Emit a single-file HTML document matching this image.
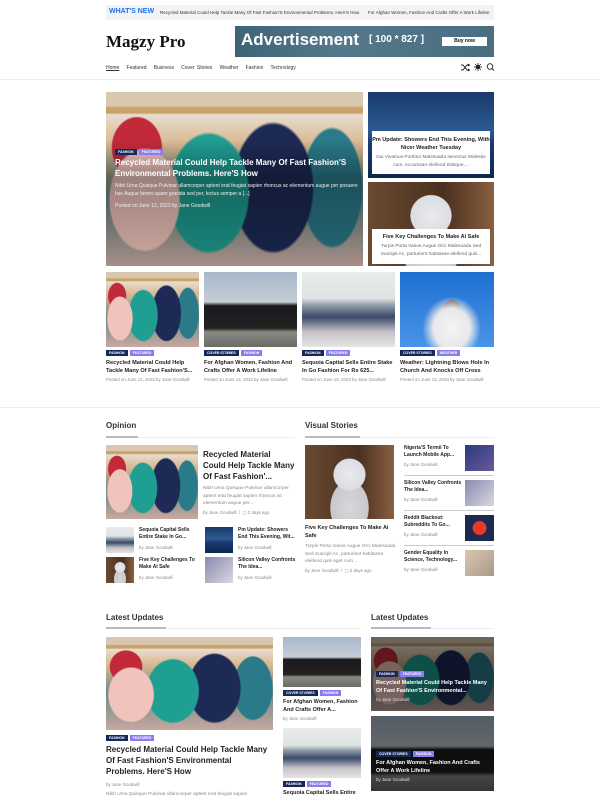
<!DOCTYPE html>
<html><head><meta charset="utf-8"><style>
*{margin:0;padding:0;box-sizing:border-box}
body{width:600px;height:800px;overflow:hidden;background:#fff;font-family:"Liberation Sans",sans-serif;color:#222;position:relative}
.a{position:absolute}
.clothes{background:
radial-gradient(ellipse 14% 30% at 15% 62%,#f0c4bc 0,#f0c4bc 95%,transparent 100%),
radial-gradient(ellipse 16% 35% at 40% 58%,#1f9e92 0,#1f9e92 95%,transparent 100%),
radial-gradient(ellipse 16% 38% at 65% 55%,#1c2a55 0,#1c2a55 95%,transparent 100%),
radial-gradient(ellipse 10% 18% at 12% 32%,#c22a3a 0,#c22a3a 95%,transparent 100%),
radial-gradient(ellipse 12% 35% at 88% 55%,#2a7a8a 0,#2a7a8a 95%,transparent 100%),
linear-gradient(180deg,#d8c8b0 0,#d8c8b0 8%,#c9a36a 9%,#c9a36a 12%,#e8ddd0 13%,#d8b890 30%,#6a8a86 60%,#c8a8a0 100%)}
.crowd{background:linear-gradient(180deg,#a7b8cc 0,#c5cdd5 40%,#1a1a1e 45%,#222 75%,#8a8a85 80%,#6a6a66 100%)}
.store{background:linear-gradient(180deg,#e9ecec 0,#dfe3e2 35%,#8a9aa6 45%,#3a4a6a 60%,#c8c2c8 80%,#e5e5e5 100%)}
.church{background:radial-gradient(ellipse at 55% 75%,#f4f4f4 0,#e8e8ea 25%,transparent 40%),radial-gradient(circle at 55% 48%,#5a4a48 0,#5a4a48 12%,transparent 13%),linear-gradient(180deg,#1e6fd0,#4a94e8)}
.robot{background:radial-gradient(circle at 50% 40%,#e8eaee 0,#dcdde2 25%,transparent 26%),radial-gradient(ellipse at 50% 85%,#d8d8dc 0,#c8c8cc 30%,transparent 31%),linear-gradient(90deg,#6a4a30,#4a3020 60%,#8a6040)}
.sea{background:linear-gradient(180deg,#1a3a6a 0,#2a5a90 45%,#1a3a70 60%,#0a2850 100%)}
.tag{display:inline-block;font-size:3.5px;font-weight:bold;color:#fff;padding:1px 3px;margin-right:2px;text-transform:uppercase;vertical-align:top;line-height:4px}
.t1{background:#15285a}.t2{background:#8a7cf0}
.ttl{font-size:5.6px;font-weight:bold;color:#222;line-height:8px;height:16px;overflow:hidden}
.meta{font-size:4.4px;color:#888;white-space:nowrap}
.h{font-size:8px;font-weight:bold;color:#333}
</style></head><body>
<!-- ticker -->
<div class="a" style="left:106px;top:5px;width:388px;height:15px;background:#f3f3f4"></div>
<div class="a" style="left:109px;top:8px;font-size:7px;font-weight:bold;color:#1e6ff0">WHAT'S NEW</div>
<div class="a" style="left:160px;top:10px;font-size:4.5px;color:#333;white-space:nowrap;width:334px;overflow:hidden">Recycled Material Could Help Tackle Many Of Fast Fashion'S Environmental Problems. Here'S How &nbsp;&nbsp;&nbsp;&nbsp;&nbsp; For Afghan Women, Fashion And Crafts Offer A Work Lifeline</div>
<!-- logo -->
<div class="a" style="left:106px;top:32px;font-family:'Liberation Serif',serif;font-size:17px;font-weight:bold;color:#111">Magzy Pro</div>
<div class="a" style="left:235px;top:26px;width:259px;height:31px;background:linear-gradient(90deg,#3f6476,#55778a 40%,#4a6f80)"></div>
<div class="a" style="left:241px;top:30px;font-size:17px;font-weight:bold;color:#fff">Advertisement</div>
<div class="a" style="left:369px;top:34px;font-size:10px;font-weight:bold;color:#fff">[ 100 * 827 ]</div>
<div class="a" style="left:442px;top:37px;width:45px;height:9px;background:#fff;font-size:5px;font-weight:bold;text-align:center;line-height:9px;color:#111">Buy now</div>
<!-- nav -->
<div class="a" style="left:106px;top:65px;font-size:5px;color:#333;white-space:nowrap;word-spacing:1px"><u>Home</u> &nbsp; Featured &nbsp; Business &nbsp; Cover Stories &nbsp; Weather &nbsp; Fashion &nbsp; Technology</div>
<svg class="a" style="left:460px;top:62px" width="36" height="10" viewBox="0 0 36 10" fill="none" stroke="#222" stroke-width="0.9"><path d="M1 3h2l4 5h2M1 8h2l4-5h2M8 2l1.5 1L8 4M8 7l1.5 1L8 9"/><circle cx="18" cy="5" r="2" fill="#222"/><path d="M18 1v1M18 8v1M14 5h1M21 5h1M15.2 2.2l.7.7M20.1 7.1l.7.7M15.2 7.8l.7-.7M20.1 2.9l.7-.7"/><circle cx="30" cy="4.5" r="2.8"/><path d="M32 6.5l2 2"/></svg>
<div class="a" style="left:0;top:79px;width:600px;height:1px;background:#eee"></div>
<!-- hero -->
<div class="a clothes" style="left:106px;top:92px;width:257px;height:174px"></div>
<div class="a" style="left:106px;top:140px;width:257px;height:126px;background:linear-gradient(180deg,rgba(0,0,0,0),rgba(0,0,0,.35) 30%,rgba(0,0,0,.15))"></div>
<div class="a" style="left:115px;top:149px"><span class="tag t1">Fashion</span><span class="tag t2">Featured</span></div>
<div class="a" style="left:115px;top:157px;width:245px;font-size:8px;font-weight:bold;color:#fff;line-height:11px">Recycled Material Could Help Tackle Many Of Fast Fashion'S Environmental Problems. Here'S How</div>
<div class="a" style="left:115px;top:183px;width:245px;font-size:5px;color:#eee;line-height:7.5px">Nibh Urna Quisque Pulvinar ullamcorper aptent erat feugiat sapien rhoncus ac elementum augue per posuere hac Augue fames quam gravida sed per, lectus semper a [...]</div>
<div class="a" style="left:115px;top:203px;font-size:5px;color:#eee">Posted on June 13, 2023 by Jane Goodwill</div>
<div class="a sea" style="left:368px;top:92px;width:126px;height:86px"></div>
<div class="a" style="left:372px;top:131px;width:118px;height:43px;background:#fff"></div>
<div class="a" style="left:372px;top:136px;width:118px;text-align:center;font-size:5.5px;font-weight:bold;line-height:8px">Pm Update: Showers End This Evening, With Nicer Weather Tuesday</div>
<div class="a" style="left:374px;top:154px;width:114px;text-align:center;font-size:4.8px;color:#666;line-height:7.5px">Dui Vivamus Porttitor Malesuada senectus Molestie cum. Accumsan eleifend tristique,...</div>
<div class="a robot" style="left:368px;top:182px;width:126px;height:84px"></div>
<div class="a" style="left:372px;top:229px;width:118px;height:35px;background:#fff"></div>
<div class="a" style="left:372px;top:234px;width:118px;text-align:center;font-size:5.5px;font-weight:bold">Five Key Challenges To Make Ai Safe</div>
<div class="a" style="left:374px;top:243px;width:114px;text-align:center;font-size:4.8px;color:#666;line-height:7.5px">Turpis Porta Varius Augue Orci Malesuada Sed Suscipit Ac, parturient habitasse eleifend quis...</div>
<!-- grid -->
<div class="a clothes" style="left:106px;top:272px;width:93px;height:75px"></div>
<div class="a crowd" style="left:204px;top:272px;width:93px;height:75px"></div>
<div class="a store" style="left:302px;top:272px;width:93px;height:75px"></div>
<div class="a church" style="left:400px;top:272px;width:94px;height:75px"></div>
<div class="a" style="left:106px;top:350px"><span class="tag t1">Fashion</span><span class="tag t2">Featured</span></div>
<div class="a" style="left:204px;top:350px"><span class="tag t1">Cover Stories</span><span class="tag t2">Fashion</span></div>
<div class="a" style="left:302px;top:350px"><span class="tag t1">Fashion</span><span class="tag t2">Featured</span></div>
<div class="a" style="left:400px;top:350px"><span class="tag t1">Cover Stories</span><span class="tag t2">Weather</span></div>
<div class="a ttl" style="left:106px;top:359px;width:95px">Recycled Material Could Help Tackle Many Of Fast Fashion'S...</div>
<div class="a ttl" style="left:204px;top:359px;width:95px">For Afghan Women, Fashion And Crafts Offer A Work Lifeline</div>
<div class="a ttl" style="left:302px;top:359px;width:95px">Sequoia Capital Sells Entire Stake In Go Fashion For Rs 625...</div>
<div class="a ttl" style="left:400px;top:359px;width:96px">Weather: Lightning Blows Hole In Church And Knocks Off Cross</div>
<div class="a meta" style="left:106px;top:377px">Posted on June 13, 2023 by Jane Goodwill</div>
<div class="a meta" style="left:204px;top:377px">Posted on June 13, 2023 by Jane Goodwill</div>
<div class="a meta" style="left:302px;top:377px">Posted on June 13, 2023 by Jane Goodwill</div>
<div class="a meta" style="left:400px;top:377px">Posted on June 13, 2023 by Jane Goodwill</div>
<div class="a" style="left:0;top:407px;width:600px;height:1px;background:#eee"></div>
<!-- opinion -->
<div class="a h" style="left:106px;top:421px">Opinion</div>
<div class="a" style="left:106px;top:437px;width:189px;height:1px;background:#eee"></div>
<div class="a" style="left:106px;top:436px;width:32px;height:1.5px;background:#bbb"></div>
<div class="a h" style="left:305px;top:421px">Visual Stories</div>
<div class="a" style="left:305px;top:437px;width:189px;height:1px;background:#eee"></div>
<div class="a" style="left:305px;top:436px;width:55px;height:1.5px;background:#bbb"></div>
<div class="a clothes" style="left:106px;top:445px;width:92px;height:74px"></div>
<div class="a" style="left:203px;top:449px;width:92px;font-size:8px;font-weight:bold;line-height:11px">Recycled Material Could Help Tackle Many Of Fast Fashion'...</div>
<div class="a" style="left:203px;top:485px;width:92px;font-size:4.8px;color:#888;line-height:7.5px">Nibh Urna Quisque Pulvinar ullamcorper aptent erat feugiat sapien rhoncus ac elementum augue per...</div>
<div class="a meta" style="left:203px;top:510px">by Jane Goodwill &nbsp;/ &nbsp;▢ 2 days ago</div>
<div class="a store" style="left:106px;top:527px;width:28px;height:26px"></div>
<div class="a ttl" style="left:139px;top:527px;width:60px;font-size:5px;line-height:7px;height:14px">Sequoia Capital Sells Entire Stake In Go...</div>
<div class="a meta" style="left:139px;top:545px">by Jane Goodwill</div>
<div class="a sea" style="left:205px;top:527px;width:28px;height:26px"></div>
<div class="a ttl" style="left:238px;top:527px;width:58px;font-size:5px;line-height:7px;height:14px">Pm Update: Showers End This Evening, Wit...</div>
<div class="a meta" style="left:238px;top:545px">by Jane Goodwill</div>
<div class="a robot" style="left:106px;top:557px;width:28px;height:26px"></div>
<div class="a ttl" style="left:139px;top:557px;width:60px;font-size:5px;line-height:7px;height:14px">Five Key Challenges To Make Ai Safe</div>
<div class="a meta" style="left:139px;top:575px">by Jane Goodwill</div>
<div class="a" style="left:205px;top:557px;width:28px;height:26px;background:linear-gradient(135deg,#8a8ab0,#d8d8e0)"></div>
<div class="a ttl" style="left:238px;top:557px;width:58px;font-size:5px;line-height:7px;height:14px">Silicon Valley Confronts The Idea...</div>
<div class="a meta" style="left:238px;top:575px">by Jane Goodwill</div>
<!-- visual -->
<div class="a robot" style="left:305px;top:445px;width:89px;height:74px"></div>
<div class="a ttl" style="left:305px;top:524px;width:92px;font-size:5.5px">Five Key Challenges To Make Ai Safe</div>
<div class="a" style="left:305px;top:543px;width:92px;font-size:4.8px;color:#888;line-height:7.5px">Turpis Porta Varius Augue Orci Malesuada Sed Suscipit Ac, parturient habitasse eleifend quis eget cum...</div>
<div class="a meta" style="left:305px;top:568px">by Jane Goodwill &nbsp;/ &nbsp;▢ 2 days ago</div>
<div class="a ttl" style="left:404px;top:445px;width:58px;font-size:5px;line-height:7px;height:14px">Nigeria'S Termii To Launch Mobile App...</div>
<div class="a meta" style="left:404px;top:462px">by Jane Goodwill</div>
<div class="a" style="left:465px;top:445px;width:29px;height:26px;background:linear-gradient(135deg,#2a3a80,#6a5a9a)"></div>
<div class="a" style="left:404px;top:475px;width:90px;height:1px;background:#ccc"></div>
<div class="a ttl" style="left:404px;top:480px;width:58px;font-size:5px;line-height:7px;height:14px">Silicon Valley Confronts The Idea...</div>
<div class="a meta" style="left:404px;top:497px">by Jane Goodwill</div>
<div class="a" style="left:465px;top:480px;width:29px;height:26px;background:linear-gradient(135deg,#8a8ab0,#d8d8e0)"></div>
<div class="a" style="left:404px;top:510px;width:90px;height:1px;background:#ccc"></div>
<div class="a ttl" style="left:404px;top:515px;width:58px;font-size:5px;line-height:7px;height:14px">Reddit Blackout: Subreddits To Go...</div>
<div class="a meta" style="left:404px;top:532px">by Jane Goodwill</div>
<div class="a" style="left:465px;top:515px;width:29px;height:26px;background:radial-gradient(circle at 50% 50%,#e83a2a 0,#e83a2a 35%,#1a2a50 36%)"></div>
<div class="a" style="left:404px;top:545px;width:90px;height:1px;background:#ccc"></div>
<div class="a ttl" style="left:404px;top:550px;width:58px;font-size:5px;line-height:7px;height:14px">Gender Equality In Science, Technology...</div>
<div class="a meta" style="left:404px;top:567px">by Jane Goodwill</div>
<div class="a" style="left:465px;top:550px;width:29px;height:26px;background:linear-gradient(135deg,#d8c8b0,#a8988a)"></div>
<!-- latest -->
<div class="a h" style="left:106px;top:613px">Latest Updates</div>
<div class="a" style="left:106px;top:628px;width:255px;height:1px;background:#eee"></div>
<div class="a" style="left:106px;top:627px;width:60px;height:1.5px;background:#bbb"></div>
<div class="a h" style="left:371px;top:613px">Latest Updates</div>
<div class="a" style="left:371px;top:628px;width:123px;height:1px;background:#eee"></div>
<div class="a" style="left:371px;top:627px;width:60px;height:1.5px;background:#bbb"></div>
<div class="a clothes" style="left:106px;top:637px;width:167px;height:93px"></div>
<div class="a" style="left:106px;top:735px"><span class="tag t1">Fashion</span><span class="tag t2">Featured</span></div>
<div class="a" style="left:106px;top:744px;width:165px;font-size:8px;font-weight:bold;line-height:11px">Recycled Material Could Help Tackle Many Of Fast Fashion'S Environmental Problems. Here'S How</div>
<div class="a meta" style="left:106px;top:782px">by Jane Goodwill</div>
<div class="a" style="left:106px;top:792px;font-size:4.8px;color:#888">Nibh Urna Quisque Pulvinar ullamcorper aptent erat feugiat sapien</div>
<div class="a crowd" style="left:283px;top:637px;width:78px;height:50px"></div>
<div class="a" style="left:283px;top:690px"><span class="tag t1">Cover Stories</span><span class="tag t2">Fashion</span></div>
<div class="a ttl" style="left:283px;top:698px;width:80px;font-size:5.5px">For Afghan Women, Fashion And Crafts Offer A...</div>
<div class="a meta" style="left:283px;top:716px">by Jane Goodwill</div>
<div class="a store" style="left:283px;top:728px;width:78px;height:50px"></div>
<div class="a" style="left:283px;top:781px"><span class="tag t1">Fashion</span><span class="tag t2">Featured</span></div>
<div class="a ttl" style="left:283px;top:789px;width:80px;font-size:5.5px">Sequoia Capital Sells Entire</div>
<div class="a clothes" style="left:371px;top:637px;width:123px;height:74px"></div>
<div class="a" style="left:371px;top:637px;width:123px;height:74px;background:rgba(0,0,0,.5)"></div>
<div class="a" style="left:376px;top:671px"><span class="tag t1">Fashion</span><span class="tag t2">Featured</span></div>
<div class="a" style="left:376px;top:680px;width:115px;font-size:5.5px;font-weight:bold;color:#fff;line-height:7.5px">Recycled Material Could Help Tackle Many Of Fast Fashion'S Environmental...</div>
<div class="a meta" style="left:376px;top:697px;color:#ddd">by Jane Goodwill</div>
<div class="a crowd" style="left:371px;top:716px;width:123px;height:75px"></div>
<div class="a" style="left:371px;top:716px;width:123px;height:75px;background:rgba(0,0,0,.5)"></div>
<div class="a" style="left:376px;top:751px"><span class="tag t1">Cover Stories</span><span class="tag t2">Fashion</span></div>
<div class="a" style="left:376px;top:760px;width:115px;font-size:5.5px;font-weight:bold;color:#fff;line-height:7.5px">For Afghan Women, Fashion And Crafts Offer A Work Lifeline</div>
<div class="a meta" style="left:376px;top:777px;color:#ddd">by Jane Goodwill</div>
</body></html>
